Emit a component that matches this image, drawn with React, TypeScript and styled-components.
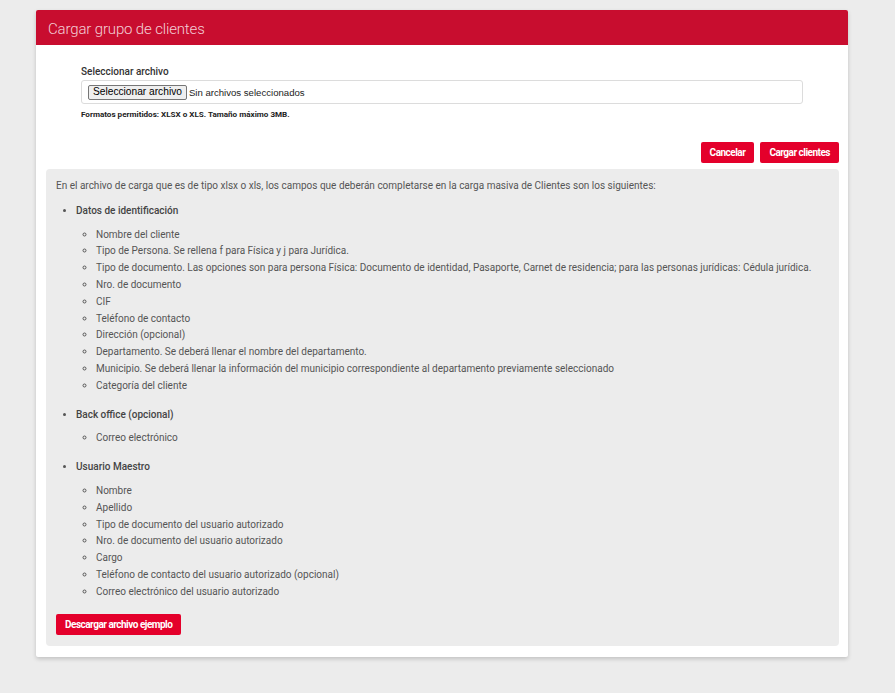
import { FC } from "react";
import styled, { createGlobalStyle } from "styled-components";

const GlobalStyle = createGlobalStyle`
  html, body {
    margin: 0;
    padding: 0;
    background: #ececec;
    font-family: Roboto, "Liberation Sans", Arial, sans-serif;
  }
`;

const identificacion = [
  "Nombre del cliente",
  "Tipo de Persona. Se rellena f para Física y j para Jurídica.",
  "Tipo de documento. Las opciones son para persona Física: Documento de identidad, Pasaporte, Carnet de residencia; para las personas jurídicas: Cédula jurídica.",
  "Nro. de documento",
  "CIF",
  "Teléfono de contacto",
  "Dirección (opcional)",
  "Departamento. Se deberá llenar el nombre del departamento.",
  "Municipio. Se deberá llenar la información del municipio correspondiente al departamento previamente seleccionado",
  "Categoría del cliente",
];

const backOffice = ["Correo electrónico"];

const usuarioMaestro = [
  "Nombre",
  "Apellido",
  "Tipo de documento del usuario autorizado",
  "Nro. de documento del usuario autorizado",
  "Cargo",
  "Teléfono de contacto del usuario autorizado (opcional)",
  "Correo electrónico del usuario autorizado",
];

const sections = [
  { title: "Datos de identificación", items: identificacion },
  { title: "Back office (opcional)", items: backOffice },
  { title: "Usuario Maestro", items: usuarioMaestro },
];

const App: FC = () => {
  return (
    <>
      <GlobalStyle />
      <Page>
        <Card>
          <Header>Cargar grupo de clientes</Header>
          <Form>
            <Label>Seleccionar archivo</Label>
            <FileBox>
              <FileButton type="button">Seleccionar archivo</FileButton>
              <FileName>Sin archivos seleccionados</FileName>
            </FileBox>
            <Hint>Formatos permitidos: XLSX o XLS. Tamaño máximo 3MB.</Hint>
          </Form>
          <Actions>
            <RedButton>Cancelar</RedButton>
            <RedButton>Cargar clientes</RedButton>
          </Actions>
          <InfoBox>
            <Intro>
              En el archivo de carga que es de tipo xlsx o xls, los campos que deberán completarse en la
              carga masiva de Clientes son los siguientes:
            </Intro>
            <MainList>
              {sections.map((s) => (
                <Section key={s.title}>
                  <SectionTitle>{s.title}</SectionTitle>
                  <SubList>
                    {s.items.map((item) => (
                      <SubItem key={item}>{item}</SubItem>
                    ))}
                  </SubList>
                </Section>
              ))}
            </MainList>
            <RedButton>Descargar archivo ejemplo</RedButton>
          </InfoBox>
        </Card>
      </Page>
    </>
  );
};

const Page = styled.div`
  padding: 10px 0 36px 36px;
`;

const Card = styled.div`
  width: 812px;
  background: #fff;
  border-radius: 2px;
  box-shadow: 0 2px 4px rgba(0, 0, 0, 0.18);
  padding-bottom: 11px;
`;

const Header = styled.div`
  height: 35px;
  box-sizing: border-box;
  display: flex;
  align-items: center;
  padding: 3px 0 0 12px;
  background: #c80d2f;
  color: rgba(255, 255, 255, 0.8);
  font-size: 15px;
  font-weight: 300;
  letter-spacing: -0.15px;
  border-radius: 2px 2px 0 0;
`;

const Form = styled.div`
  padding: 21px 45px 0 45px;
  display: flex;
  flex-direction: column;
`;

const Label = styled.label`
  font-size: 10px;
  font-weight: 500;
  color: #333;
  margin-bottom: 3px;
`;

const FileBox = styled.div`
  height: 24px;
  box-sizing: border-box;
  border: 1px solid #dcdcdc;
  border-radius: 3px;
  display: flex;
  align-items: center;
  padding-left: 6px;
  gap: 2px;
`;

const FileButton = styled.button`
  height: 15px;
  padding: 0 4px;
  background: #efefef;
  border: 1px solid #767676;
  border-radius: 2px;
  font-family: "Liberation Sans", Arial, sans-serif;
  font-size: 10.2px;
  color: #000;
  line-height: 1;
`;

const FileName = styled.span`
  font-family: "Liberation Sans", Arial, sans-serif;
  font-size: 9.6px;
  color: #222;
`;

const Hint = styled.div`
  margin-top: 5px;
  font-size: 8.1px;
  font-weight: 700;
  color: #222;
`;

const Actions = styled.div`
  display: flex;
  justify-content: flex-end;
  gap: 6px;
  padding: 0 9px 0 0;
  margin-top: 23px;
`;

const RedButton = styled.button`
  height: 21px;
  padding: 0 9px;
  border: none;
  border-radius: 2px;
  background: #e4002b;
  color: #fff;
  font-family: Roboto, "Liberation Sans", sans-serif;
  font-size: 10px;
  font-weight: 700;
  letter-spacing: -0.5px;
  cursor: pointer;
`;

const InfoBox = styled.div`
  margin: 6px 9px 0 10px;
  background: #ececec;
  border-radius: 4px;
  padding: 9px 10px 11px 10px;
  font-size: 10px;
  line-height: 16.8px;
  color: #555;
`;

const Intro = styled.p`
  margin: 0;
`;

const MainList = styled.ul`
  margin: 8px 0 13px 0;
  padding-left: 20px;
  list-style: disc;
`;

const Section = styled.li`
  margin-bottom: 12px;
  &:last-child {
    margin-bottom: 0;
  }
`;

const SectionTitle = styled.div`
  font-weight: 500;
  color: #444;
  margin-bottom: 7px;
`;

const SubList = styled.ul`
  margin: 0;
  padding-left: 20px;
  list-style: circle;
`;

const SubItem = styled.li``;

export default App;
